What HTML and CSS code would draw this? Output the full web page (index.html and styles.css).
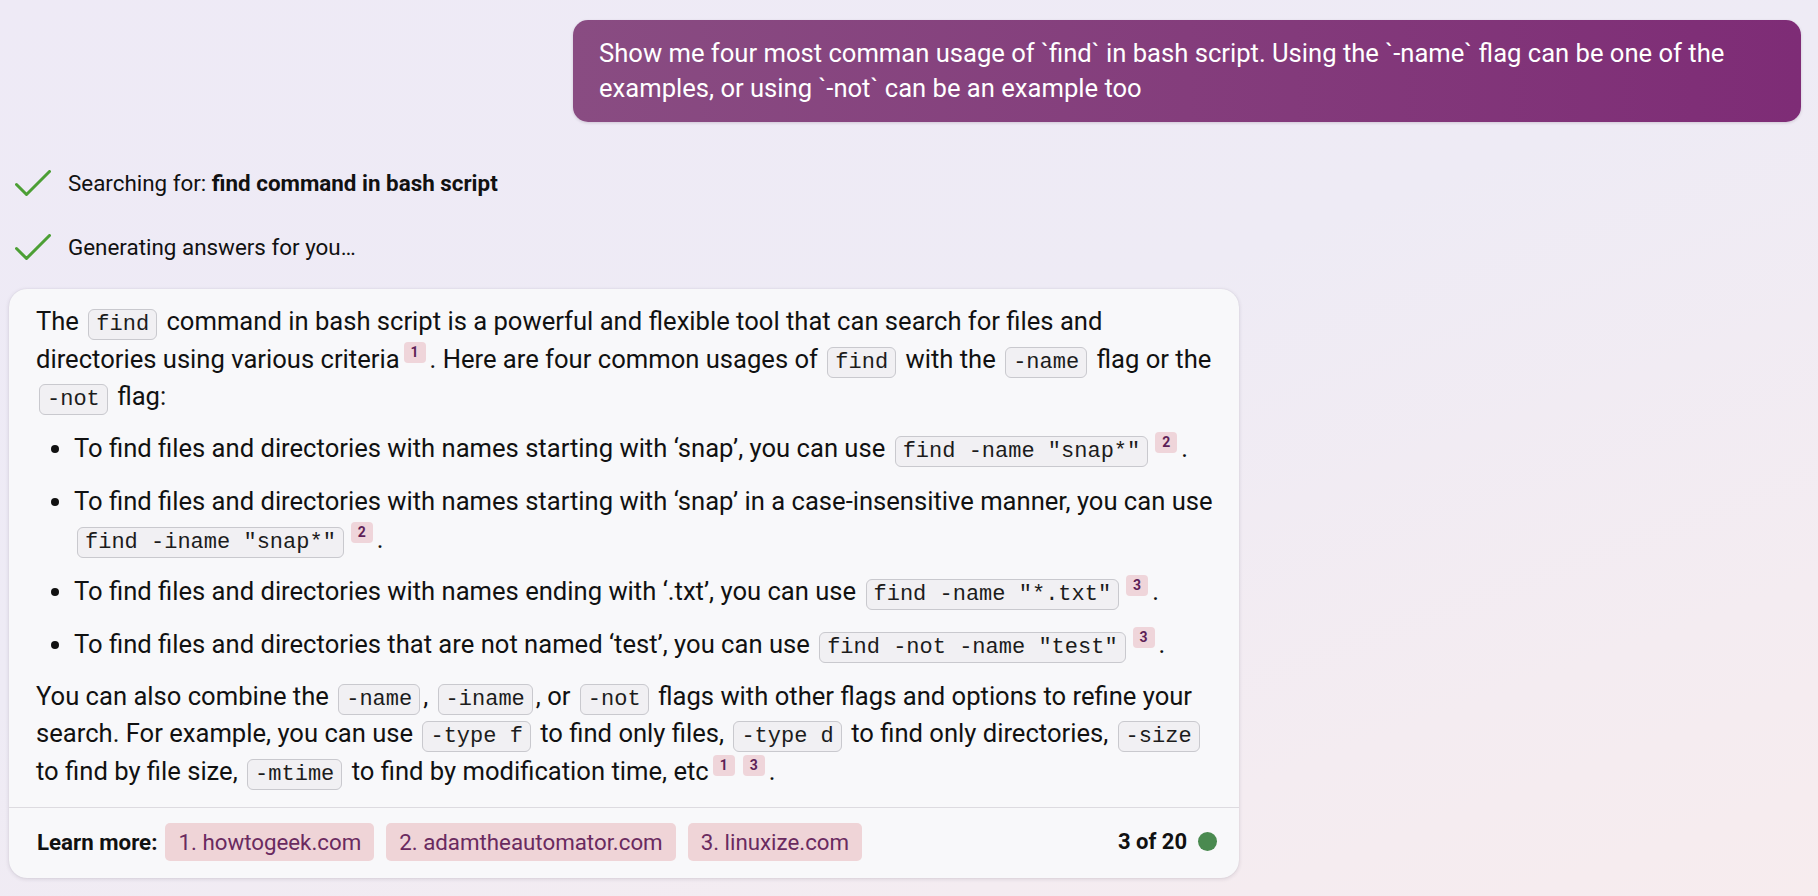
FILE: index.html
```html
<!DOCTYPE html>
<html lang="en">
<head>
<meta charset="utf-8">
<title>Chat</title>
<link rel="stylesheet" href="styles.css">
</head>
<body>
<div class="page">
  <div class="user-row">
    <div class="bubble">Show me four most comman usage of `find` in bash script. Using the `-name` flag can be one of the examples, or using `-not` can be an example too</div>
  </div>

  <div class="status first">
    <svg class="check" viewBox="0 0 36 27" width="36" height="27"><path d="M1.5 14.5 L11.5 24.5 L34.5 1.5" fill="none" stroke="#4c9f35" stroke-width="3" stroke-linecap="round" stroke-linejoin="round"/></svg>
    <span>Searching for: <b>find command in bash script</b></span>
  </div>
  <div class="status second">
    <svg class="check" viewBox="0 0 36 27" width="36" height="27"><path d="M1.5 14.5 L11.5 24.5 L34.5 1.5" fill="none" stroke="#4c9f35" stroke-width="3" stroke-linecap="round" stroke-linejoin="round"/></svg>
    <span>Generating answers for you…</span>
  </div>

  <div class="card">
    <div class="content">
      <p>The <code>find</code> command in bash script is a powerful and flexible tool that can search for files and directories using various criteria<span class="cite">1</span>. Here are four common usages of <code>find</code> with the <code>-name</code> flag or the <code>-not</code> flag:</p>
      <ul>
        <li>To find files and directories with names starting with ‘snap’, you can use <code>find -name "snap*"</code><span class="cite">2</span>.</li>
        <li>To find files and directories with names starting with ‘snap’ in a case-insensitive manner, you can use <code>find -iname "snap*"</code><span class="cite">2</span>.</li>
        <li>To find files and directories with names ending with ‘.txt’, you can use <code>find -name "*.txt"</code><span class="cite">3</span>.</li>
        <li>To find files and directories that are not named ‘test’, you can use <code>find -not -name "test"</code><span class="cite">3</span>.</li>
      </ul>
      <p>You can also combine the <code>-name</code>, <code>-iname</code>, or <code>-not</code> flags with other flags and options to refine your search. For example, you can use <code>-type f</code> to find only files, <code>-type d</code> to find only directories, <code>-size</code> to find by file size, <code>-mtime</code> to find by modification time, etc<span class="cite">1</span><span class="cite">3</span>.</p>
    </div>
    <div class="footer">
      <div class="learn">
        <span class="lm">Learn more:</span>
        <span class="src">1. howtogeek.com</span>
        <span class="src">2. adamtheautomator.com</span>
        <span class="src">3. linuxize.com</span>
      </div>
      <div class="count">3 of 20<span class="dot"></span></div>
    </div>
  </div>
</div>
</body>
</html>
```

FILE: styles.css
```css
* { box-sizing: border-box; }
html, body { margin: 0; padding: 0; }
body {
  width: 1818px;
  height: 896px;
  overflow: hidden;
  font-family: Roboto, "Noto Sans", Arial, sans-serif;
  color: #111111;
  background: linear-gradient(160deg, #eeeaf6 0%, #eeebf5 45%, #f4ecf1 80%, #f7ecee 100%);
}
.page {
  padding: 20px 17px 0 9px;
  display: flex;
  flex-direction: column;
}
.user-row {
  display: flex;
  justify-content: flex-end;
}
.bubble {
  max-width: 1228px;
  padding: 16px 26px;
  border-radius: 15px;
  background: linear-gradient(90deg, #894c82 0%, #843d7c 50%, #7e2c76 100%);
  color: #ffffff;
  font-size: 25.6px;
  line-height: 35px;
  box-shadow: 0 1px 3px rgba(60, 20, 60, 0.18);
}
.status {
  display: flex;
  align-items: center;
  gap: 17px;
  padding-left: 6px;
  font-size: 22.4px;
  height: 40px;
}
.status b { font-weight: 700; }
.status.first { margin-top: 41px; }
.status.second { margin-top: 24px; }
.check { flex: none; display: block; }
.card {
  margin-top: 22px;
  width: 1230px;
  background: #f8f8fa;
  border-radius: 18px;
  box-shadow: 0 1px 4px rgba(40, 30, 60, 0.14), 0 0 1px rgba(40, 30, 60, 0.12);
  overflow: hidden;
}
.content {
  padding: 14px 20px 16px 27px;
  font-size: 25.6px;
  line-height: 37.7px;
}
.content p { margin: 0; }
.content ul {
  margin: 14px 0;
  padding-left: 38px;
}
.content li { margin: 0 0 15px 0; }
.content li:last-child { margin-bottom: 0; }
code {
  font-family: "Liberation Mono", "Courier New", monospace;
  font-size: 22px;
  line-height: 1;
  white-space: nowrap;
  color: #1c1c1c;
  background: #f1f0f3;
  border: 1px solid #c9c9ce;
  border-radius: 6px;
  padding: 2px 7px;
  margin: 0 3px;
}
.cite {
  display: inline-block;
  width: 22px;
  height: 21px;
  line-height: 21px;
  text-align: center;
  font-size: 14px;
  font-weight: 700;
  color: #5e1f57;
  background: #efd5da;
  border-radius: 4px;
  margin: 0 4px;
  vertical-align: 10.5px;
}
.footer {
  border-top: 1px solid #dddbe0;
  display: flex;
  align-items: center;
  justify-content: space-between;
  padding: 15px 22px 17px 28px;
}
.learn {
  display: flex;
  align-items: center;
  gap: 12px;
  font-size: 22.3px;
}
.lm { font-weight: 700; margin-right: -4px; }
.src {
  height: 38px;
  line-height: 38px;
  padding: 0 13px;
  border-radius: 5px;
  background: #efd4d7;
  color: #6a2a5f;
}
.count {
  display: flex;
  align-items: center;
  gap: 11px;
  font-size: 22px;
  font-weight: 700;
}
.dot {
  width: 19px;
  height: 19px;
  border-radius: 50%;
  background: #4a8a50;
}
```
